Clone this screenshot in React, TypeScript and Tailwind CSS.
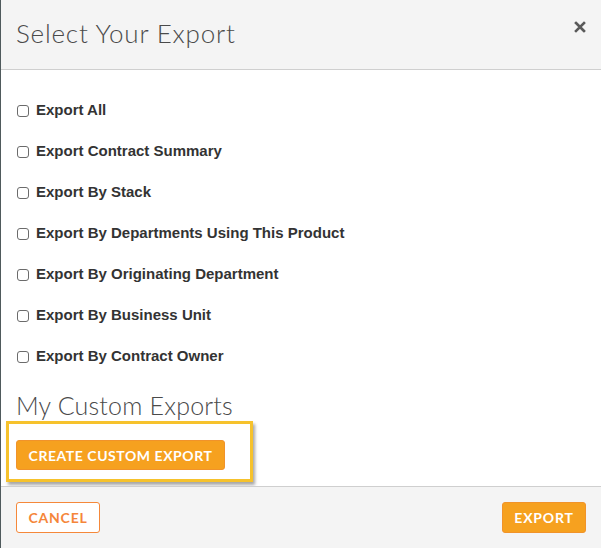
const options = [
  "Export All",
  "Export Contract Summary",
  "Export By Stack",
  "Export By Departments Using This Product",
  "Export By Originating Department",
  "Export By Business Unit",
  "Export By Contract Owner",
];

export default function App() {
  return (
    <div className="flex h-[548px] w-[601px] flex-col overflow-hidden border-l border-[#4f5a5c] bg-white">
      {/* Header */}
      <div className="flex h-[70px] shrink-0 items-center justify-between border-b border-[#cfcfcf] bg-[#f4f4f4] pl-[15px] pr-[15px]">
        <h1 className="pb-[2px] font-['Lato',sans-serif] text-[26px] font-light tracking-[0.8px] text-[#4a4a4a]">
          Select Your Export
        </h1>
        <button className="mb-[16px] text-[#5a5a5a]">
          <svg width="12" height="12" viewBox="0 0 12 12">
            <path d="M2 2 L10 10 M10 2 L2 10" stroke="currentColor" strokeWidth="2.6" strokeLinecap="square" />
          </svg>
        </button>
      </div>

      {/* Body */}
      <div className="flex flex-1 flex-col pt-[20px]">
        {options.map((label) => (
          <label key={label} className="flex h-[41px] items-center pl-[16px]">
            <span className="mr-[7px] h-[12px] w-[12px] rounded-[3px] border border-[#6b6b6b] bg-white" />
            <span className="font-['Liberation_Sans',Arial,sans-serif] text-[15px] font-bold text-[#333]">
              {label}
            </span>
          </label>
        ))}

        <h2 className="mt-[13px] pl-[15px] font-['Lato',sans-serif] text-[25px] leading-[30px] font-light tracking-[0.2px] text-[#4a4a4a]">
          My Custom Exports
        </h2>

        <div className="ml-[5px] mt-[1px] w-[247px] border-[3px] border-[#f6c22c] pb-[9px] pl-[7px] pt-[16px] shadow-[2px_3px_3px_rgba(0,0,0,0.35)]">
          <button className="h-[30px] w-[209px] rounded-[3px] border border-[#f1932a] bg-[#f6a11f] font-['Lato',sans-serif] text-[14px] font-bold tracking-[0.55px] text-white">
            CREATE CUSTOM EXPORT
          </button>
        </div>
      </div>

      {/* Footer */}
      <div className="flex h-[62px] shrink-0 items-center justify-between border-t border-[#cfcfcf] bg-[#f4f4f4] pl-[15px] pr-[15px]">
        <button className="h-[31px] w-[84px] rounded-[3px] border border-[#f5883a] bg-white font-['Lato',sans-serif] text-[14px] font-bold tracking-[0.8px] text-[#f5863a]">
          CANCEL
        </button>
        <button className="h-[31px] w-[84px] rounded-[3px] border border-[#f1932a] bg-[#f6a11f] font-['Lato',sans-serif] text-[14px] font-bold tracking-[0.8px] text-white">
          EXPORT
        </button>
      </div>
    </div>
  );
}
